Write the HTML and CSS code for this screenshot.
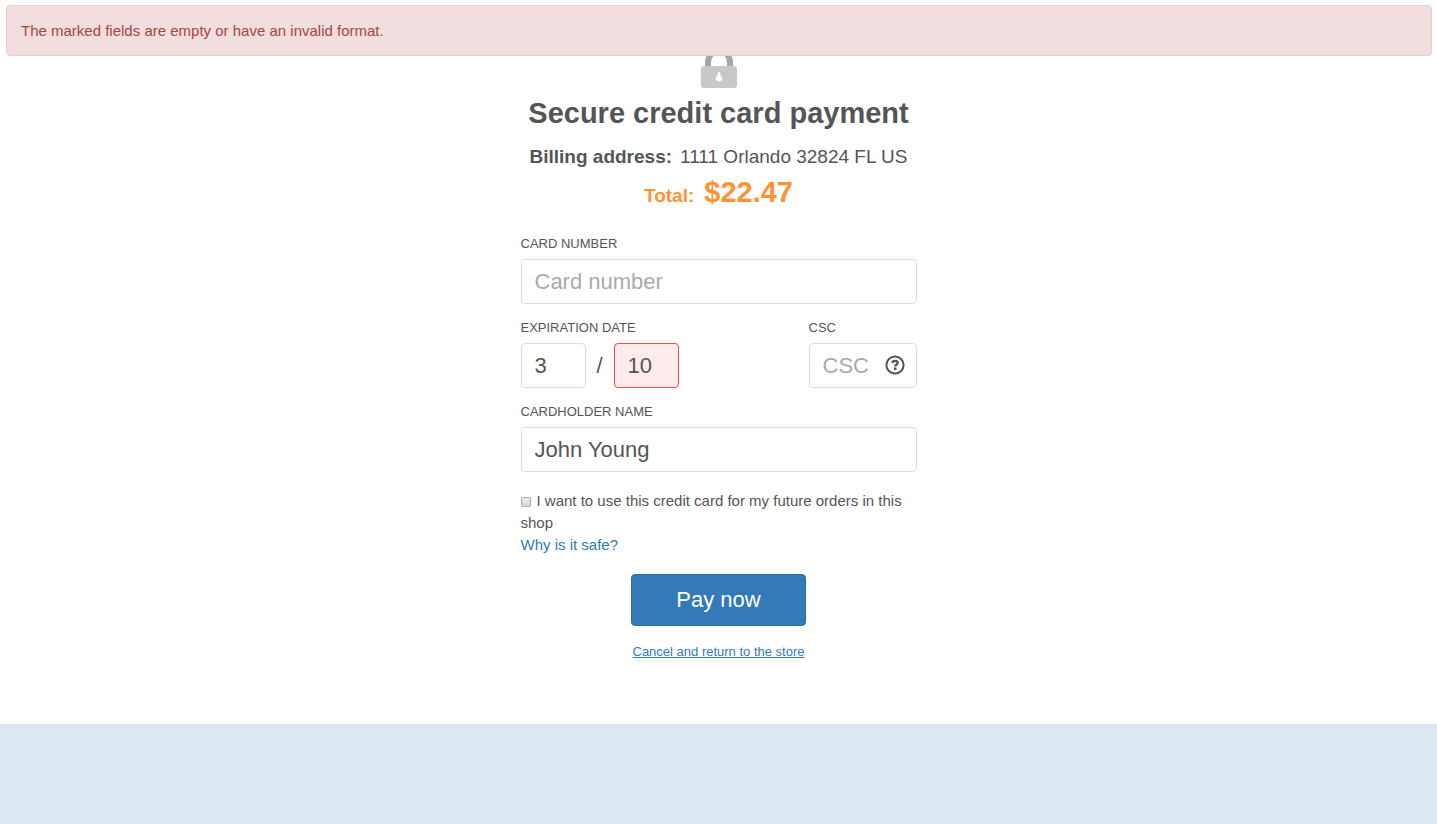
FILE: index.html
```html
<!DOCTYPE html>
<html lang="en">
<head>
<meta charset="utf-8">
<title>Secure credit card payment</title>
<link rel="stylesheet" href="styles.css">
</head>
<body>
<div class="alert" role="alert">The marked fields are empty or have an invalid format.</div>
<main class="page">
  <header class="header">
    <svg class="lock" viewBox="0 0 36 50" aria-hidden="true">
      <path d="M7 30V25a11 13 0 0 1 22 0v5" fill="none" stroke="#a6a6a6" stroke-width="6"/>
      <rect y="28" width="36" height="22" rx="3" fill="#c8c8c8"/>
      <path d="M18 34c-1 0-1.500 1-1.500 3.500-1 .5-1.700 1.300-1.700 2.800a3.200 3.200 0 0 0 6.400 0c0-1.500-.7-2.300-1.700-2.800 0-2.500-.5-3.500-1.500-3.500z" fill="#fff"/>
    </svg>
    <h1 class="title">Secure credit card payment</h1>
    <p class="address"><strong>Billing address:</strong><span>1111 Orlando 32824 FL US</span></p>
    <p class="total"><span>Total:</span><span class="amount">$22.47</span></p>
  </header>
  <form class="form">
    <div class="field">
      <label class="label" for="number">CARD NUMBER</label>
      <input class="input" id="number" type="text" placeholder="Card number">
    </div>
    <div class="row">
      <div class="field">
        <label class="label" for="month">EXPIRATION DATE</label>
        <div class="expiry">
          <input class="input short" id="month" type="text" value="3">
          <span class="slash">/</span>
          <input class="input short invalid" type="text" value="10" aria-label="Expiration year" aria-invalid="true">
        </div>
      </div>
      <div class="field">
        <label class="label" for="csc">CSC</label>
        <div class="input csc">
          <input class="csc-input" id="csc" type="text" placeholder="CSC">
          <button class="help" type="button" aria-label="What is the CSC?">
            <svg class="help-icon" viewBox="0 0 20 20" aria-hidden="true">
              <circle cx="10" cy="10" r="8.600" fill="none" stroke="#555" stroke-width="2"/>
              <path d="M7.300 7.900C7.600 6.500 8.600 5.900 10 5.900c1.600 0 2.600.8 2.600 2 0 1.800-2.400 1.700-2.400 3.600" fill="none" stroke="#555" stroke-width="2.400"/>
              <path d="M8.900 12.500h2.600v2.500H8.900z" fill="#555"/>
            </svg>
          </button>
        </div>
      </div>
    </div>
    <div class="field">
      <label class="label" for="name">CARDHOLDER NAME</label>
      <input class="input" id="name" type="text" value="John Young">
    </div>
    <div class="save">
      <input class="check" id="save" type="checkbox"><label for="save">I want to use this credit card for my future orders in this shop</label>
    </div>
    <a class="safe" href="#">Why is it safe?</a>
    <div class="actions">
      <button class="pay" type="submit">Pay now</button>
      <a class="cancel" href="#">Cancel and return to the store</a>
    </div>
  </form>
</main>
<footer class="footer"></footer>
</body>
</html>
```
FILE: styles.css
```css
* { box-sizing: border-box; }
body {
  margin: 0;
  min-height: 100vh;
  display: flex;
  flex-direction: column;
  background: #fff;
  color: #555;
  font: 15px/22px "Liberation Sans", Arial, sans-serif;
}
.alert {
  position: absolute;
  top: 5px;
  left: 6px;
  right: 5px;
  padding: 14px;
  border: 1px solid #ebccd1;
  border-radius: 4px;
  background: #f2dede;
  color: #a94442;
  line-height: 21px;
}
.page {
  width: 100%;
  max-width: 396px;
  margin: 0 auto;
  padding: 38px 0 62px;
}
.header {
  display: flex;
  flex-direction: column;
  align-items: center;
  margin-bottom: 20px;
  white-space: nowrap;
}
.lock { width: 36px; height: 50px; }
.title {
  margin: 7px 0 13px;
  font-size: 29px;
  line-height: 36px;
}
.address {
  display: flex;
  gap: 8px;
  margin: 0;
  font-size: 19px;
  line-height: 26px;
}
.total {
  display: flex;
  align-items: baseline;
  gap: 10px;
  margin: 4px 0 0;
  color: #ff9333;
  font-size: 19px;
  font-weight: bold;
  line-height: 36px;
}
.amount { font-size: 29px; }
.field { margin-bottom: 14px; }
.label {
  display: block;
  margin-bottom: 6px;
  font-size: 13px;
  line-height: 19px;
}
.input {
  display: block;
  width: 100%;
  height: 45px;
  padding: 0 13px;
  border: 1px solid #ddd;
  border-radius: 4px;
  background: #fff;
  color: #555;
  font: 22px "Liberation Sans", Arial, sans-serif;
}
::placeholder { color: #aaa; opacity: 1; }
.row { display: flex; justify-content: space-between; }
.expiry { display: flex; align-items: center; }
.short { width: 65px; }
.slash { width: 28px; text-align: center; font-size: 22px; }
.invalid { border-color: #eb4c4c; background: #ffebeb; }
.csc {
  display: flex;
  align-items: center;
  justify-content: space-between;
  width: 108px;
  padding-right: 11px;
}
.csc-input {
  flex: 1;
  min-width: 0;
  padding: 0;
  border: 0;
  outline: 0;
  background: none;
  color: #555;
  font: inherit;
}
.help { display: flex; margin-bottom: 2px; padding: 0; border: 0; background: none; }
.help-icon { width: 20px; height: 20px; }
.save { margin-top: 18px; }
.check {
  appearance: none;
  width: 10px;
  height: 10px;
  margin: 0 6px 0 0;
  border: 1px solid #aaa;
  border-radius: 2px;
  background: linear-gradient(#eee, #d5d5d5);
  vertical-align: -1px;
}
.safe { color: #337ab7; text-decoration: none; }
.actions {
  display: flex;
  flex-direction: column;
  align-items: center;
  margin-top: 18px;
}
.pay {
  height: 52px;
  padding: 0 44px;
  border: 1px solid #2e6da4;
  border-radius: 4px;
  background: #337ab7;
  color: #fff;
  font: 22px "Liberation Sans", Arial, sans-serif;
}
.cancel {
  margin-top: 16px;
  color: #337ab7;
  font-size: 13px;
  line-height: 20px;
}
.footer {
  flex: 1;
  min-height: 100px;
  background: #dce8f1;
}
```
